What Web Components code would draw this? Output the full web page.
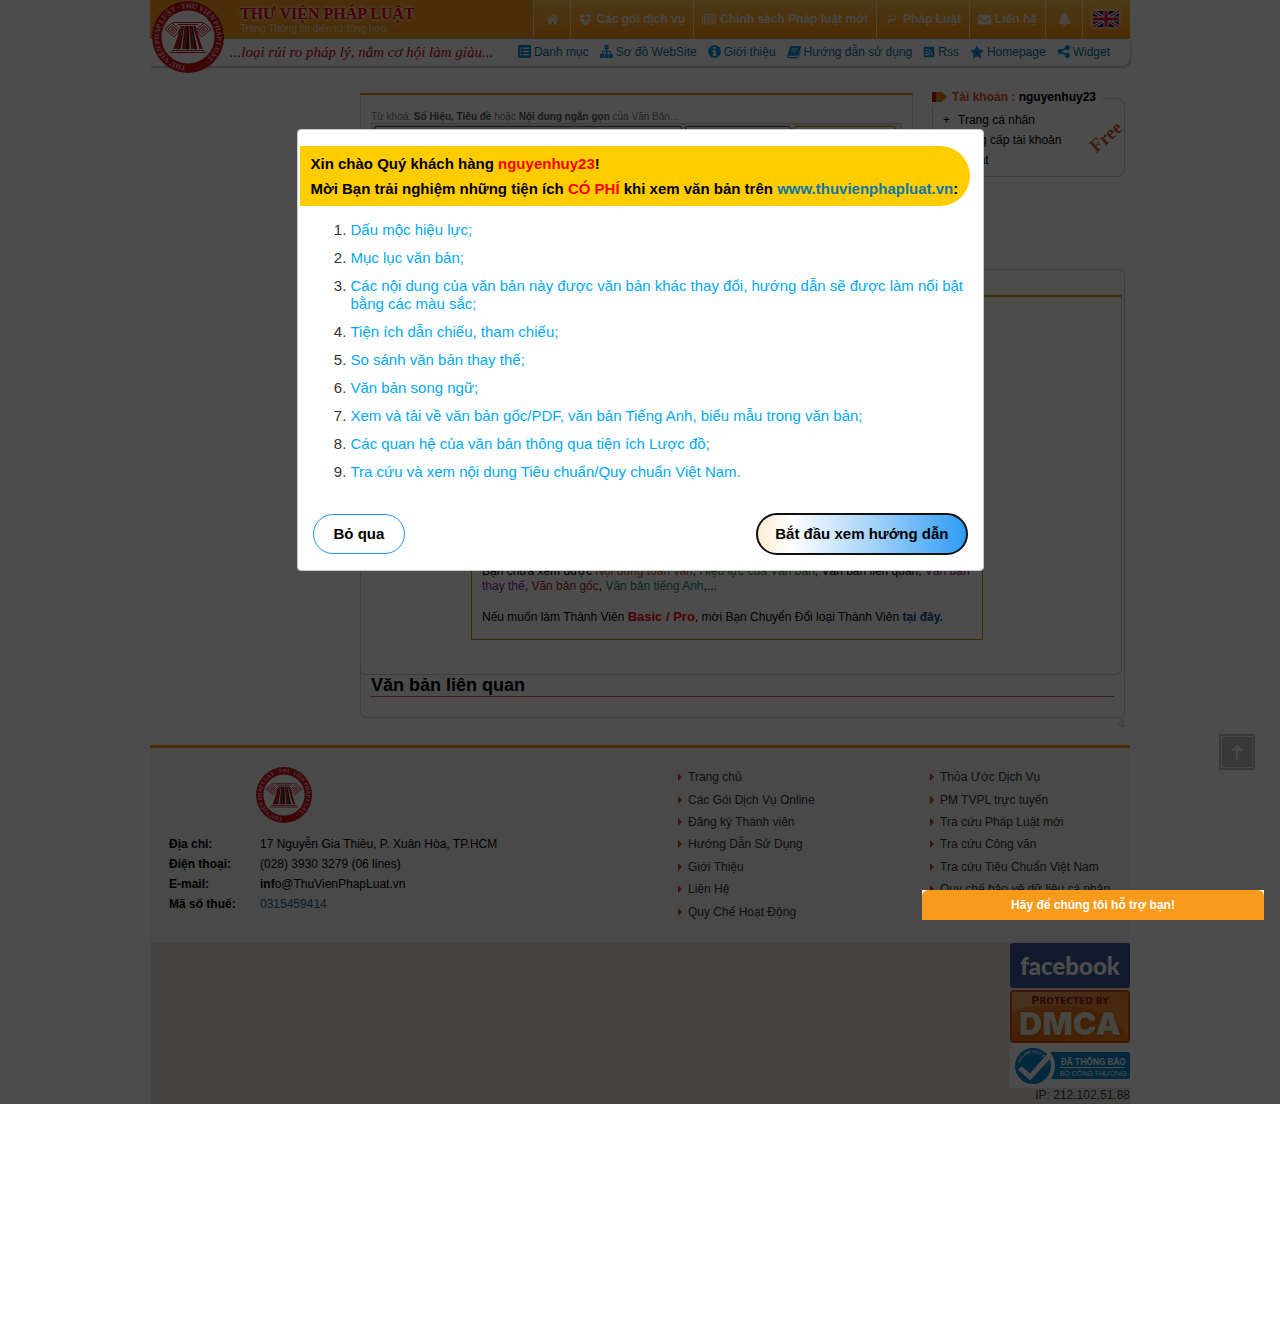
<!DOCTYPE html>
<html lang="vi">
<head>
<meta charset="utf-8">
<title>Thư Viện Pháp Luật</title>
<style>
body{margin:0;background:#fff;color:#000;font:12px/20px "Liberation Sans",Arial,sans-serif}
</style>
</head>
<body>
<tv-app></tv-app>
<script>
const base = `<style>
:host{display:block;box-sizing:border-box}
*{box-sizing:border-box}
a{color:inherit;text-decoration:none}
svg{display:block;flex:none}
</style>`;
function define(name, html) {
  const t = document.createElement('template');
  t.innerHTML = base + html;
  customElements.define(name, class extends HTMLElement {
    constructor() {
      super();
      this.attachShadow({mode: 'open'}).append(t.content.cloneNode(true));
    }
  });
}

/* icons, drawn on a 16 x 16 grid in the current colour */
const icons = {
  home: '<path d="M8 1.6 .4 8l1 1.1L8 3.6l6.600 5.500 1-1.100-2.400-2V2h-2.200v2.100zM8 5 2.700 9.400V14h4v-3.700h2.600V14h4V9.400z"/>',
  box: '<path d="M4.700 1 8 3.500 3.400 6.400.300 4zM11.300 1l4.400 3-3.100 2.400L8 3.500zM3.400 6.400 8 9.200 4.700 12 .300 8.900zM12.600 6.400l3.100 2.500-4.400 3.100L8 9.200zM8 10.200l3.300 2.700 1.300-.900v1.100L8 15.800l-4.600-2.700V12l1.300.900z"/>',
  news: '<path fill-rule="evenodd" d="M3 2h13v10.500c0 1-.7 1.500-1.500 1.500H1.500C.6 14 0 13.400 0 12.500V4h3zM1 5v7.500c0 1 1.200 1 1.200 0V5zM4 3v10h11V3zm1 1.200h4.300v4H5zm1 1v2h2.300v-2zm4.500-1H14v1h-3.500zm0 2H14v1h-3.500zm0 2H14v1h-3.500zM5 9.500h4.300v1H5zm5.500 0H14v1h-3.500zM5 11.200h4.300v1H5zm5.500 0H14v1h-3.500z"/>',
  law: '<path d="M5 4h2v1.500H5zM8.500 3H10v1.500H8.500zM11.500 4.500H13V6h-1.500zM4 8h6.500c1.500 0 2-.5 2.500-1-.1 2.200-2 3-4 3H6.500L4.500 12.500 3 13l1-3z"/>',
  mail: '<path d="M0 3.200C0 2.500.6 2 1.300 2h13.400c.7 0 1.300.5 1.300 1.200 0 .8-.6 1.500-1.200 1.900L9.500 9c-.9.600-2.100.600-3 0L1.200 5.100C.5 4.600 0 4 0 3.200zM0 6l5.800 4.200c1.300.9 3.100.9 4.400 0L16 6v6.800c0 .7-.6 1.200-1.300 1.200H1.300C.6 14 0 13.500 0 12.800z"/>',
  bell: '<path d="M8 0c.8 0 1.200.5 1.100 1.300C11.800 1.900 13 4 13 6.500c0 3 .8 4.500 2.500 5.800v1.200H.5v-1.200C2.200 11 3 9.500 3 6.500 3 4 4.200 1.900 6.900 1.300 6.800.5 7.200 0 8 0zM5.800 14h4.400c-.3 1.400-1.200 2-2.200 2s-1.900-.6-2.200-2z"/>',
  list: '<path fill-rule="evenodd" d="M1.500 0h13c.9 0 1.500.6 1.500 1.500v13c0 .9-.6 1.500-1.500 1.500h-13C.6 16 0 15.400 0 14.500v-13C0 .6.600 0 1.500 0zM2.500 3v2h2V3zm4 0v2h7V3zm-4 4v2h2V7zm4 0v2h7V7zm-4 4v2h2v-2zm4 0v2h7v-2z"/>',
  tree: '<path d="M5.500 0h5v5H9v2h4.500v4H16v5h-5v-5h1.200V8.300H9V11h1.500v5h-5v-5H7V8.300H3.800V11H5v5H0v-5h2.500V7H7V5H5.500z"/>',
  info: '<path fill-rule="evenodd" d="M8 0a8 8 0 1 1 0 16A8 8 0 0 1 8 0zM6.700 2.500v2.300h2.600V2.500zM5.500 6.300v1.500h1v4h-1v1.500h5v-1.500h-1V6.300z"/>',
  book: '<path fill-rule="evenodd" d="M5 1h10c1 0 1.300.6 1 1.500L13.200 11c-.3.900-1 1.300-1.900 1.300H2.700c-1.200 0-1.200 1.400 0 1.400h9.500c.6 0 .8-.3 1-.9L15.500 6c.5.5.5 1 .2 1.800l-2 6c-.3.800-1 1.200-1.900 1.200H2.200C.6 15 0 13.600.4 12.300L3.200 2.500C3.500 1.500 4 1 5 1zm.7 3-.3 1h7l.3-1zM5 6.500l-.3 1h7l.3-1z"/>',
  rss: '<path fill-rule="evenodd" d="M2 1h12c.6 0 1 .4 1 1v12c0 .6-.4 1-1 1H2c-.6 0-1-.4-1-1V2c0-.6.400-1 1-1zm2.500 8.800a1.500 1.500 0 1 0 .1 3 1.500 1.500 0 0 0-.1-3zM3.200 6.500V8c2.700 0 4.800 2.100 4.800 4.800h1.500a6.300 6.300 0 0 0-6.300-6.300zm0-3.300v1.600c4.500 0 8 3.500 8 8h1.600c0-5.300-4.300-9.600-9.600-9.600z"/>',
  star: '<path d="m8 .300 2.400 4.900 5.500.8-4 3.900.9 5.500L8 12.800l-4.800 2.600.9-5.500-4-3.900 5.500-.8z"/>',
  share: '<path d="M12.800 9.500a3.200 3.200 0 1 1-3.200 2.900L6 10.600a3.200 3.200 0 1 1 0-5.200l3.600-1.800a3.200 3.200 0 1 1 1 2L7 7.400v1.200l3.600 1.800c.6-.6 1.300-.9 2.200-.9z"/>'
};
customElements.define('tv-icon', class extends HTMLElement {
  constructor() { super(); this.attachShadow({mode: 'open'}); }
  connectedCallback() {
    const s = this.getAttribute('size') || 13;
    this.shadowRoot.innerHTML = `<style>:host{display:inline-flex;flex:none}svg{display:block}</style>
    <svg width="${s}" height="${s}" viewBox="0 0 16 16" fill="currentColor" aria-hidden="true">${icons[this.getAttribute('name')]}</svg>`;
  }
});

define('tv-logo', `<style>:host{width:72px}svg{width:100%;height:auto}text{font:bold 7px "Liberation Serif",serif;fill:#f4c8c8}</style>
<svg viewBox="0 0 72 72" aria-hidden="true">
<defs><path id="ring" d="M36 65A29 29 0 1 1 36.100 65"/></defs>
<circle cx="36" cy="36" r="36" fill="#c8141c"/><circle cx="36" cy="36" r="26.500" fill="#fff"/>
<text><textPath href="#ring" startOffset="2">THƯ VIỆN PHÁP LUẬT · THƯ VIỆN PHÁP LUẬT ·</textPath></text>
<g fill="none" stroke="#c8141c" stroke-width="1"><path d="M21 21.500h30M26 23.500h20M20 49.500h32M18 51.500h36"/>
<path d="M13 28l7-6 8 7-6 7zM16 28.500l4-3.500 5 4-3.500 4zM19 28.500l1.500-1 2 1.500-1.500 1.500zM59 28l-7-6-8 7 6 7zM56 28.500l-4-3.500-5 4 3.500 4zM53 28.500l-1.500-1-2 1.500 1.500 1.500z"/></g>
<path fill="#c8141c" d="M29 25h2l-4.500 23h-5zM32.500 25h2.500l-1 23h-4zM37 25h2l3.500 23H39zM41 25h2.500l7 23h-3z"/>
<path fill="#222" d="M31 25h1l-3.500 23h-2zM35 25h1.500l1 23H34zM39 25h1.500l4.500 23h-2.500z"/>
</svg>`);

define('tv-nav-cell', `<style>
:host{display:flex;align-items:stretch;border-left:1px solid #f5e6cf;font-weight:bold;color:#f5efe6}
a{display:flex;align-items:center;justify-content:center;gap:4px;padding:0 8px;min-width:36px;height:100%;white-space:nowrap}
</style><a href="#"><slot></slot></a>`);

define('tv-quick-link', `<style>:host{color:#0b6a9d}
a{display:flex;align-items:center;gap:3px;white-space:nowrap}
::slotted(tv-icon){color:#0594d8}
</style><a href="#"><slot></slot></a>`);

define('tv-header', `<style>
:host{position:relative;height:67px}
.bar{display:flex;justify-content:space-between;height:39px;background:#f89c1e;border-bottom:1px solid #a8a090}
.brand{padding:5px 0 0 90px}
h1{margin:0;font:bold 16px/18px "Liberation Serif","Times New Roman",serif;color:#f00012;text-shadow:0 0 5px #fff,0 0 3px #fff}
.brand p{margin:0;font-size:10px;line-height:11px;color:#eadfce}
nav.top{display:flex;background:linear-gradient(#fcc04e,#ff9008);padding-right:1px}
.flag{box-shadow:0 0 4px #fff;margin:0 2px}
.sub{display:flex;justify-content:space-between;height:27px;align-items:center;padding:0 20px 2px 80px;border-radius:0 0 8px 0;box-shadow:1px 2px 2px #c4c4c4;}
.sub em{font:italic 15px/20px "Liberation Serif","Times New Roman",serif;color:#c8000e}
.sub nav{display:flex;gap:11px}
tv-logo{position:absolute;left:2px;top:1px}
</style>
<div class="bar">
<div class="brand"><h1>THƯ VIỆN PHÁP LUẬT</h1><p>Trang Thông tin điện tử tổng hợp</p></div>
<nav class="top">
<tv-nav-cell><tv-icon name="home"></tv-icon></tv-nav-cell>
<tv-nav-cell><tv-icon name="box"></tv-icon><span>Các gói dịch vụ</span></tv-nav-cell>
<tv-nav-cell><tv-icon name="news" size="14"></tv-icon><span>Chính sách Pháp luật mới</span></tv-nav-cell>
<tv-nav-cell><tv-icon name="law" size="14"></tv-icon><span>Pháp Luật</span></tv-nav-cell>
<tv-nav-cell><tv-icon name="mail"></tv-icon><span>Liên hệ</span></tv-nav-cell>
<tv-nav-cell><tv-icon name="bell"></tv-icon></tv-nav-cell>
<tv-nav-cell><svg class="flag" width="26" height="16" viewBox="0 0 26 16" role="img" aria-label="English"><path fill="#15206e" d="M0 0h26v16H0z"/><path stroke="#fff" stroke-width="3.500" d="m0 0 26 16M26 0 0 16"/><path stroke="#d5152c" stroke-width="1.300" d="m0 0 26 16M26 0 0 16"/><path stroke="#fff" stroke-width="5" d="M13 0v16M0 8h26"/><path stroke="#d5152c" stroke-width="3" d="M13 0v16M0 8h26"/></svg></tv-nav-cell>
</nav></div>
<div class="sub"><em>...loại rủi ro pháp lý, nắm cơ hội làm giàu...</em>
<nav>
<tv-quick-link><tv-icon name="list"></tv-icon><span>Danh mục</span></tv-quick-link>
<tv-quick-link><tv-icon name="tree"></tv-icon><span>Sơ đồ WebSite</span></tv-quick-link>
<tv-quick-link><tv-icon name="info"></tv-icon><span>Giới thiệu</span></tv-quick-link>
<tv-quick-link><tv-icon name="book" size="14"></tv-icon><span>Hướng dẫn sử dụng</span></tv-quick-link>
<tv-quick-link><tv-icon name="rss" size="12"></tv-icon><span>Rss</span></tv-quick-link>
<tv-quick-link><tv-icon name="star" size="14"></tv-icon><span>Homepage</span></tv-quick-link>
<tv-quick-link><tv-icon name="share"></tv-icon><span>Widget</span></tv-quick-link>
</nav></div>
<tv-logo></tv-logo>`);

define('tv-search', `<style>
:host{border:1px solid #c5cbd0;border-top:2px solid #e8900c;padding:15px 10px 0}
label{display:block;font-size:10px;line-height:13px;color:#777}
b{color:#555}
form{display:flex;gap:3px;padding:2px 5px 4px 2px;border:1px solid #c0c8ce;background:#e4e9ee;margin:0}
input,select,button{font:12px "Liberation Sans",sans-serif;height:26px;border:1px solid #444;background:#fff;padding:0 6px;border-radius:2px}
input{flex:1;min-width:0}select{width:106px}
button{width:102px;border-color:#d8820a;background:#fff}
</style>
<label for="q">Từ khoá: <b>Số Hiệu, Tiêu đề</b> hoặc <b>Nội dung ngắn gọn</b> của Văn Bản...</label>
<form><input id="q" type="text"><select aria-label="Loại"><option></option></select><button type="button" aria-label="Tìm"></button></form>`);

define('tv-account', `<style>
:host{position:relative;border:1px solid #c5cbd0;border-radius:8px;height:79px}
h2{display:flex;align-items:center;gap:5px;width:max-content;margin:-11px 0 0 -1px;padding-right:6px;background:#fff;font-size:12px;line-height:18px;color:#dd4b20}
h2 b{color:#000}
ul{list-style:none;margin:4px 0 0;padding:0 0 0 10px}
li{display:flex}li::before{content:"+";width:15px}
.free{position:absolute;right:-2px;top:18px}
.free text{font:bold 19px "Liberation Serif",serif;fill:#c95f2c}
</style>
<h2><svg width="15" height="10" viewBox="0 0 15 10" aria-hidden="true"><path fill="#c8101c" d="M0 0h4v10H0z"/><path fill="#dd8a14" d="M4 0h6l5 5-5 5H4z"/></svg><span>Tài khoản : <b>nguyenhuy23</b></span></h2>
<ul><li><a href="#">Trang cá nhân</a></li><li><a href="#">Nâng cấp tài khoản</a></li><li><a href="#">Thoát</a></li></ul>
<svg class="free" width="40" height="40" viewBox="0 0 40 40"><text x="20" y="26" text-anchor="middle" transform="rotate(-41 20 20)">Free</text></svg>`);

define('tv-document', `<style>
:host{border:1px solid #c5cbd0;border-radius:6px;padding:25px 0 20px}
.view{display:flex;justify-content:center;align-items:flex-end;min-height:380px;margin:0 2px 0 -1px;padding:0 30px 34px 0;border:1px solid #c5cbd0;border-top:2px solid #e8900c;border-radius:0 0 6px 6px}
.note{width:512px;margin-left:2px;padding:10px 10px 14px;border:1px solid #d8860c;line-height:15px}
p{margin:0}p+p{margin-top:15px}
.r{font-size:13px;color:#f0000c}
h2{margin:0 10px;font-size:18px;line-height:21px;border-bottom:1px solid #d8501c}
</style>
<div class="view"><div class="note">
<p>Bạn chưa xem được <a href="#" style="color:#c8501e">Nội dung toàn văn</a>, <a href="#" style="color:#2e8b1e">Hiệu lực của Văn bản</a>, Văn bản liên quan, <a href="#" style="color:#90189a">Văn bản thay thế</a>, <a href="#" style="color:#a81a28">Văn bản gốc</a>, <a href="#" style="color:#158870">Văn bản tiếng Anh</a>,...</p>
<p>Nếu muốn làm Thành Viên <b class="r">Basic / Pro</b>, mời Bạn Chuyển Đổi loại Thành Viên <a href="#" style="color:#08498c"><b>tại đây.</b></a></p>
</div></div>
<h2>Văn bản liên quan</h2>`);

define('tv-footer', `<style>
:host{border-top:3px solid #f89408}
.info{display:flex;background:#f4f4f4;height:195px;padding:18px 0 0 19px}
.contact{width:509px}
tv-logo{width:56px;margin:1px 0 11px 87px}
dl{display:grid;grid-template-columns:91px 1fr;margin:0}
dt{font-weight:bold}dd{margin:0}
.tax{color:#0b6a9d}
ul{list-style:none;margin:0;padding:0;width:252px;height:157px;display:grid;grid-template-rows:repeat(7,1fr);align-items:center;color:#333;white-space:nowrap}
ul:last-child{width:auto}
li::before{content:"";display:inline-block;border:4px solid transparent;border-left-color:#c8401c;border-right:0;margin-right:6px}
.badges{display:flex;flex-direction:column;align-items:flex-end;background:#ebe5de;}
.badges a{background:#fff}
.badges a.d{background:none;padding:2px 0 0}
.badges span{line-height:14px;padding-bottom:2px;color:#333}
</style>
<div class="info">
<div class="contact"><tv-logo></tv-logo>
<dl><dt>Địa chỉ:</dt><dd>17 Nguyễn Gia Thiều, P. Xuân Hòa, TP.HCM</dd><dt>Điện thoại:</dt><dd>(028) 3930 3279 (06 lines)</dd><dt>E-mail:</dt><dd><a href="#"><b>inf</b>o@ThuVienPhapLuat.vn</a></dd><dt>Mã số thuế:</dt><dd class="tax"><a href="#">0315459414</a></dd></dl></div>
<ul><li><a href="#">Trang chủ</a></li><li><a href="#">Các Gói Dịch Vụ Online</a></li><li><a href="#">Đăng ký Thành viên</a></li><li><a href="#">Hướng Dẫn Sử Dụng</a></li><li><a href="#">Giới Thiệu</a></li><li><a href="#">Liên Hệ</a></li><li><a href="#">Quy Chế Hoạt Động</a></li></ul>
<ul><li><a href="#">Thỏa Ước Dịch Vụ</a></li><li><a href="#">PM TVPL trực tuyến</a></li><li><a href="#">Tra cứu Pháp Luật mới</a></li><li><a href="#">Tra cứu Công văn</a></li><li><a href="#">Tra cứu Tiêu Chuẩn Việt Nam</a></li><li><a href="#">Quy chế bảo vệ dữ liệu cá nhân</a></li></ul>
</div>
<div class="badges">
<a href="#" style="background:none"><svg width="120" height="45" viewBox="0 0 120 45"><rect width="120" height="45" rx="3" fill="#3b5998"/><text x="60" y="32" text-anchor="middle" fill="#fff" style="font:900 24px Lato,'Open Sans',sans-serif">facebook</text></svg></a>
<a href="#" class="d"><svg width="120" height="53" viewBox="0 0 120 53"><defs><linearGradient id="g" x1="0" y1="0" x2="1" y2="1"><stop offset="0" stop-color="#e8a060"/><stop offset=".5" stop-color="#e46a08"/><stop offset="1" stop-color="#f08018"/></linearGradient></defs><rect x="1" y="1" width="118" height="51" rx="3" fill="url(#g)" stroke="#d8480c" stroke-width="2"/><path d="M2 20C30 14 100 8 118 47V2H2z" fill="#fff" opacity=".18"/><text x="60" y="14" text-anchor="middle" fill="#901c10" style="font:bold 9px 'DejaVu Sans',sans-serif"><tspan font-size="11">P</tspan>ROTECTED BY</text><text x="60" y="45" text-anchor="middle" fill="#f0e4d0" stroke="#a85010" stroke-width="1" paint-order="stroke" style="font:900 32px Inter,'Open Sans',sans-serif">DMCA</text></svg></a>
<a href="#"><svg width="120" height="45" viewBox="0 0 120 45"><rect x="40" y="9" width="80" height="27" rx="2" fill="#0588c8"/><circle cx="23" cy="23" r="22" fill="#fff"/><circle cx="23" cy="23" r="18" fill="#0588c8"/><path d="m10 25 10 9 20-22" fill="none" stroke="#fff" stroke-width="5"/><path id="arc" d="M10 23A13 13 0 0 1 36 23" fill="none"/><text fill="#fff" style="font:bold 4px 'Liberation Sans',sans-serif"><textPath href="#arc" startOffset="3">ONLINE.GOV.VN</textPath></text><text x="83" y="22" text-anchor="middle" fill="#fff" style="font:bold 9px Roboto,'Liberation Sans',sans-serif">ĐÃ THÔNG BÁO</text><path stroke="#fff" d="M50 24.500h65"/><text x="83" y="33" text-anchor="middle" fill="#fff" style="font:7px 'Liberation Sans',sans-serif">BỘ CÔNG THƯƠNG</text></svg></a>
<span>IP: 212.102.51.88</span>
</div>`);

define('tv-welcome', `<style>
:host{width:687px;max-width:100%;background:#fff;border:1px solid #c8c8c8;border-radius:4px;padding:16px 13px 15px 2px;font-size:15px;line-height:18px;color:#333}
h2{margin:0 0 15px;padding:5px 11px;background:#fc0;border-radius:0 30px 30px 0;font-size:15px;line-height:25px;color:#000}
em{font-style:normal;color:#f00}h2 a{color:#0d76a6}
ol{margin:0;padding:0 0 0 51px;display:grid;gap:10px}
li a{color:#03a9f4}
.actions{display:flex;justify-content:space-between;align-items:center;margin:32px 2px 0 13px}
button{font:bold 15px/18px "Liberation Sans",Arial,sans-serif;color:#000;background:#fff;border:1px solid #2196f3;border-radius:20px;padding:10px 20px;cursor:pointer}
.go{border:2px solid #111;border-radius:21px;padding:10px 17px;background:linear-gradient(90deg,#ffecd2,#fff 16%,#a4d3fa 55%,#2f9bf4)}
</style>
<h2>Xin chào Quý khách hàng <em><slot></slot></em>!<br>Mời Bạn trải nghiệm những tiện ích <em>CÓ PHÍ</em> khi xem văn bản trên <a href="#">www.thuvienphapluat.vn</a>:</h2>
<ol><li><a href="#">Dấu mộc hiệu lực;</a></li><li><a href="#">Mục lục văn bản;</a></li><li><a href="#">Các nội dung của văn bản này được văn bản khác thay đổi, hướng dẫn sẽ được làm nổi bật bằng các màu sắc;</a></li><li><a href="#">Tiện ích dẫn chiếu, tham chiếu;</a></li><li><a href="#">So sánh văn bản thay thế;</a></li><li><a href="#">Văn bản song ngữ;</a></li><li><a href="#">Xem và tải về văn bản gốc/PDF, văn bản Tiếng Anh, biểu mẫu trong văn bản;</a></li><li><a href="#">Các quan hệ của văn bản thông qua tiện ích Lược đồ;</a></li><li><a href="#">Tra cứu và xem nội dung Tiêu chuẩn/Quy chuẩn Việt Nam.</a></li></ol>
<div class="actions"><button type="button">Bỏ qua</button><button type="button" class="go">Bắt đầu xem hướng dẫn</button></div>`);

define('tv-chat', `<style>:host{background:#fff}
button{display:block;width:100%;height:30px;border:0;border-radius:6px 6px 0 0;background:#f89a1c;color:#fff;font:bold 12px/20px "Liberation Sans",sans-serif}</style><button type="button"><slot></slot></button>`);

define('tv-app', `<style>
:host{position:relative}
.page{width:980px;max-width:100%;margin:0 auto}
main{padding:26px 5px 0 210px}
.row{display:flex;gap:19px;align-items:flex-start;height:176px}
tv-search{flex:1;height:150px}tv-account{width:193px;margin-top:5px}
.count{text-align:right;line-height:12px;color:#ccc;margin-bottom:15px}
.up{position:absolute;right:25px;top:734px;width:36px;height:36px;padding:0;border:2px solid #bbb;background:#bbb;display:grid;place-items:stretch}
.up svg{border:1px solid #f0f0f0;width:100%;height:100%}
.shade{position:absolute;inset:0;background:rgba(0,0,0,.7)}
tv-welcome{position:absolute;top:129px;left:0;right:0;margin:0 auto}
tv-chat{position:absolute;right:16px;top:890px;width:342px}
</style>
<div class="page"><tv-header></tv-header>
<main><div class="row"><tv-search></tv-search><tv-account></tv-account></div>
<tv-document></tv-document><div class="count">4</div></main>
<tv-footer></tv-footer></div>
<button type="button" class="up" aria-label="Lên đầu trang"><svg viewBox="0 0 32 32"><path fill="#f0f0f0" d="m16 8 7 7h-6v9h-2v-9H9z"/></svg></button>
<div class="shade"></div>
<tv-welcome role="dialog">nguyenhuy23</tv-welcome>
<tv-chat>Hãy để chúng tôi hỗ trợ bạn!</tv-chat>`);
</script>
</body>
</html>
